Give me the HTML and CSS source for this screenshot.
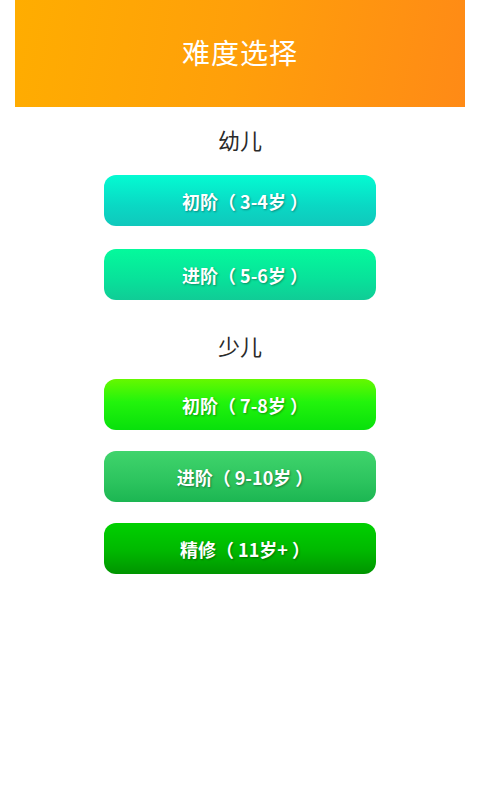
FILE: index.html
```html
<!DOCTYPE html>
<html lang="zh-CN">
<head>
    <meta charset="UTF-8">
    <meta name="viewport" content="width=device-width, initial-scale=1.0">
    <title>难度选择</title>
    <link rel="stylesheet" href="styles.css">
</head>
<body>
    <div class="header">
        <h1>难度选择</h1>
    </div>

    <div class="group group-first">
        <div class="group-title">幼儿</div>
        <div class="btn-list">
            <button class="level-btn teal">初阶（ 3-4岁 ）</button>
            <button class="level-btn mint">进阶（ 5-6岁 ）</button>
        </div>
    </div>

    <div class="group group-second">
        <div class="group-title">少儿</div>
        <div class="btn-list tight">
            <button class="level-btn lime">初阶（ 7-8岁 ）</button>
            <button class="level-btn grass">进阶（ 9-10岁 ）</button>
            <button class="level-btn forest">精修（ 11岁+ ）</button>
        </div>
    </div>
</body>
</html>
```

FILE: styles.css
```css
body {
    margin: 0;
    background: #ffffff;
    font-family: "Noto Sans CJK SC", "Noto Sans", sans-serif;
}
.header {
    margin: 0 15px;
    height: 107px;
    background: linear-gradient(100deg, #ffad00 0%, #ff9f0a 50%, #ff8a16 100%);
    display: flex;
    align-items: center;
    justify-content: center;
}
.header h1 {
    margin: 0;
    color: #ffffff;
    font-size: 28px;
    font-weight: normal;
    letter-spacing: 1px;
    padding-bottom: 3px;
}
.group {
    display: flex;
    flex-direction: column;
    align-items: center;
}
.group-first {
    margin-top: 15px;
}
.group-second {
    margin-top: 28px;
}
.group-title {
    height: 34px;
    line-height: 34px;
    font-size: 22px;
    color: #2a2a2a;
    margin-bottom: 19px;
}
.group-second .group-title {
    margin-bottom: 17px;
}
.btn-list {
    display: flex;
    flex-direction: column;
    gap: 23px;
}
.btn-list.tight {
    gap: 21px;
}
.level-btn {
    width: 272px;
    height: 51px;
    border: none;
    border-radius: 12px;
    color: #ffffff;
    font-family: "Noto Sans CJK SC", "Noto Sans", sans-serif;
    font-size: 18px;
    font-weight: bold;
    white-space: pre;
    text-shadow: 1px 1px 2px rgba(0,0,0,0.35);
    cursor: pointer;
    padding: 0 0 0 10px;
}
.teal {
    background: linear-gradient(180deg, #04fbd2 0%, #0ad8c4 60%, #10c8bc 100%);
}
.mint {
    background: linear-gradient(180deg, #04fa9c 0%, #08e19a 60%, #10cc96 100%);
}
.lime {
    background: linear-gradient(180deg, #66f800 0%, #22f40c 45%, #08e00c 100%);
}
.grass {
    background: linear-gradient(180deg, #40d46c 0%, #2cc45e 60%, #1cb652 100%);
}
.forest {
    background: linear-gradient(180deg, #00d000 0%, #00b800 55%, #009400 100%);
}
```
